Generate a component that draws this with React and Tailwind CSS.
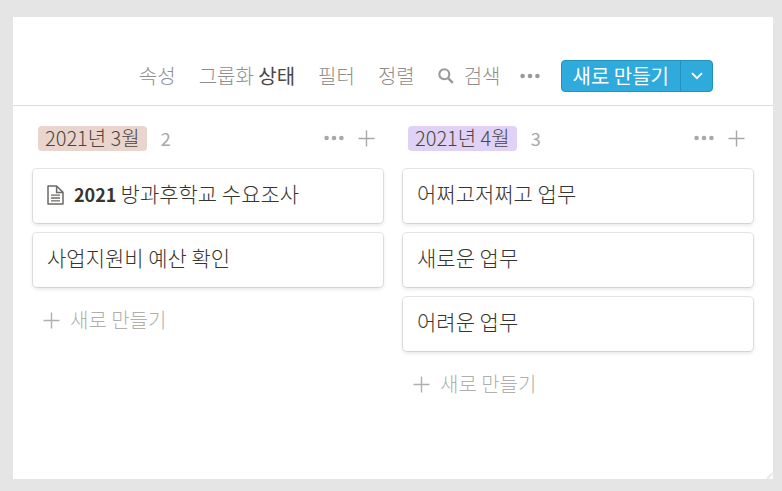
const columns = [
  {
    id: "march",
    label: "2021년 3월",
    tag: "bg-[#e9d5cd]",
    cards: [
      { prefix: "2021", title: "방과후학교 수요조사", page: true },
      { title: "사업지원비 예산 확인" },
    ],
  },
  {
    id: "april",
    label: "2021년 4월",
    tag: "bg-[#dfd2f6]",
    cards: [
      { title: "어쩌고저쩌고 업무" },
      { title: "새로운 업무" },
      { title: "어려운 업무" },
    ],
  },
];

function Dots() {
  return (
    <svg viewBox="0 0 22 6" className="h-1.5 w-[22px]" fill="currentColor" aria-hidden="true">
      <circle cx="2.6" cy="3" r="2.3" />
      <circle cx="10" cy="3" r="2.3" />
      <circle cx="17.4" cy="3" r="2.3" />
    </svg>
  );
}

function Plus() {
  return (
    <svg viewBox="0 0 17 17" className="size-[17px]" fill="none" stroke="currentColor" strokeWidth="1.4" aria-hidden="true">
      <path d="M8.5 0.5v16M0.5 8.5h16" />
    </svg>
  );
}

function SearchIcon() {
  return (
    <svg viewBox="0 0 16 16" className="size-4 text-[#9b9a97]" fill="none" stroke="currentColor" aria-hidden="true">
      <circle cx="6.3" cy="6.3" r="5" strokeWidth="2.1" />
      <path d="M9.8 9.8l5 5" strokeWidth="2.5" />
    </svg>
  );
}

function PageIcon() {
  return (
    <svg viewBox="0 0 17 20" className="h-5 w-[17px] text-[#6b6a66]" fill="none" stroke="currentColor" strokeWidth="1.5" aria-hidden="true">
      <path d="M1 1h8.6L16 7.4V19H1z" strokeLinejoin="round" />
      <path d="M9.6 1v6.4H16" />
      <path d="M4 10.2h9M4 13h9M4 15.8h9" strokeWidth="1.3" />
    </svg>
  );
}

function Card({ card }) {
  return (
    <li className="flex h-[54px] items-center gap-2.5 rounded-[4px] bg-white px-3.5 pb-0.5 text-[21px] shadow-[0_0_0_1px_rgba(15,15,15,0.1),0_2px_4px_rgba(15,15,15,0.12)]">
      {card.page && <PageIcon />}
      <span className="pb-1">
        {card.prefix && <strong className="text-[18px] font-semibold">{card.prefix} </strong>}
        {card.title}
      </span>
    </li>
  );
}

function Column({ column }) {
  return (
    <section className="min-w-0 flex-1">
      <header className="flex h-[26px] items-center pr-2 pl-[5px] text-[#a9a8a5]">
        <h2 className={`flex h-[25px] items-center rounded-[4px] px-[7px] text-[20px] font-light text-[#4b4640] ${column.tag}`}>
          {column.label}
        </h2>
        <span className="ml-3.5 text-[18px] font-normal">{column.cards.length}</span>
        <button type="button" aria-label="더 보기" className="ml-auto">
          <Dots />
        </button>
        <button type="button" aria-label="추가" className="ml-3">
          <Plus />
        </button>
      </header>
      <ul className="mt-[18px] flex flex-col gap-2.5">
        {column.cards.map((card) => (
          <Card key={card.title} card={card} />
        ))}
      </ul>
      <button type="button" className="mt-[19px] flex h-7 items-center gap-2.5 pl-2.5 text-[#b0afac]">
        <Plus />
        새로 만들기
      </button>
    </section>
  );
}

export default function App() {
  return (
    <div className="min-h-screen bg-[#e5e5e5] pt-[17px] pr-[9px] pb-3 pl-[13px] font-['Noto_Sans_CJK_KR',sans-serif] text-[20px] leading-7 font-light text-[#37352f]">
      <main className="relative min-h-[462px] overflow-hidden bg-white">
        <nav className="flex items-center justify-end gap-[23px] border-b border-[#dcdcdb] pt-[43px] pr-[60px] pb-[13px] whitespace-nowrap text-[#8f8e8b]">
          <button type="button">속성</button>
          <button type="button">
            그룹화 <span className="font-normal text-[#4a4844]">상태</span>
          </button>
          <button type="button">필터</button>
          <button type="button">정렬</button>
          <button type="button" className="flex items-center gap-2.5">
            <SearchIcon />
            검색
          </button>
          <button type="button" aria-label="더 보기" className="-ml-1 text-[#9b9a97]">
            <Dots />
          </button>
          <div className="-ml-1 flex h-8 overflow-hidden rounded-[4px] border border-[#2492bf] bg-[#2eaadc] font-normal text-white">
            <button type="button" className="flex items-center px-[11px]">
              새로 만들기
            </button>
            <button type="button" aria-label="템플릿 선택" className="flex w-8 items-center justify-center border-l border-[#2492bf]">
              <svg viewBox="0 0 12 8" className="h-2 w-3" fill="none" stroke="currentColor" strokeWidth="1.8" aria-hidden="true">
                <path d="M1 1.2l5 5 5-5" />
              </svg>
            </button>
          </div>
        </nav>
        <div className="flex gap-5 px-5 pt-[19px] pb-8">
          {columns.map((column) => (
            <Column key={column.id} column={column} />
          ))}
        </div>
        <span className="absolute -right-5 -bottom-5 size-7 rounded-full border-2 border-[#e8e8e8]" />
      </main>
    </div>
  );
}
